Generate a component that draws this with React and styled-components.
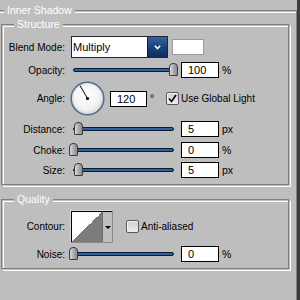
import React from 'react';
import styled, { createGlobalStyle } from 'styled-components';

const BG = '#bebebe';
const DARK = '#808080';

const Global = createGlobalStyle`
  html, body { margin: 0; padding: 0; background: ${BG}; }
  body { font-family: "Liberation Sans", Arial, sans-serif; font-size: 10px; color: #000; }
`;

const Page = styled.div`
  width: 300px;
  height: 300px;
  display: flex;
  overflow: hidden;
  background: ${BG};
`;

const Main = styled.div`
  flex: 1;
  min-width: 0;
  padding-top: 10px;
`;

const Edge = styled.div`
  width: 3px;
  flex-shrink: 0;
  background: #3c3c3c;
`;

const Group = styled.section`
  display: flex;
  flex-direction: column;
  border: 1px solid ${DARK};
  border-left: ${p => (p.$noLeft ? 'none' : `1px solid ${DARK}`)};
  box-shadow: inset ${p => (p.$noLeft ? 0 : 1)}px 1px 0 ${BG},
    inset ${p => (p.$noLeft ? 0 : 2)}px 2px 0 #fff, 1px 1px 0 ${BG}, 2px 2px 0 #fff;
  margin: ${p => p.$m || '0'};
  padding-bottom: ${p => p.$pb || 0}px;
  min-height: ${p => p.$minH || 0}px;
`;

const Legend = styled.div`
  align-self: flex-start;
  margin: -7px 0 0 ${p => p.$ml}px;
  padding: 0 3px;
  height: 13px;
  line-height: 13px;
  background: ${BG};
  color: #fff;
  font-size: 10.5px;
  white-space: nowrap;
`;

const Row = styled.div`
  display: flex;
  align-items: center;
  height: ${p => p.$h}px;
  margin-top: ${p => p.$mt}px;
`;

const Label = styled.div`
  width: 63px;
  flex-shrink: 0;
  text-align: right;
  white-space: nowrap;
`;

const Select = styled.div`
  display: flex;
  width: 97px;
  height: 22px;
  box-sizing: border-box;
  margin-left: 6px;
  border: 1px solid #262626;
  background: #fff;
`;

const SelectText = styled.div`
  flex: 1;
  padding-left: 1px;
  line-height: 20px;
  font-size: 11px;
`;

const SelectButton = styled.div`
  width: 19px;
  display: flex;
  align-items: center;
  justify-content: center;
  border-left: 1px solid #0b1a33;
  background: linear-gradient(#3463a3, #1a4480 50%, #0f2d5c);
`;

const Swatch = styled.div`
  width: 32px;
  height: 16px;
  box-sizing: border-box;
  margin-left: 4px;
  border: 1px solid #9a9a9a;
  background: #fff;
`;

const SliderWrap = styled.div`
  position: relative;
  width: 110px;
  height: 16px;
  flex-shrink: 0;
  margin-left: 4px;
`;

const Track = styled.div`
  margin: 6px 0 0 4px;
  width: 101px;
  height: 4px;
  box-sizing: border-box;
  border: 1px solid #0c1a30;
  border-radius: 2px;
  background: #2f619c;
`;

const Thumb = styled.div`
  position: absolute;
  top: 1px;
  width: 9px;
  height: 13px;
  box-sizing: border-box;
  border: 1px solid #3a3a3a;
  border-radius: 4px 4px 1px 1px;
  background: linear-gradient(90deg, #dcdcdc, #a8a8a8 55%, #8e8e8e);
`;

const Field = styled.div`
  width: ${p => p.$w || 38}px;
  height: 16px;
  box-sizing: border-box;
  flex-shrink: 0;
  margin-left: ${p => p.$ml}px;
  padding-left: 6px;
  border: 1px solid #000;
  background: #fff;
  font-size: 11px;
  line-height: 14px;
`;

const Unit = styled.div`
  width: ${p => (p.$w ? `${p.$w}px` : 'auto')};
  flex-shrink: 0;
  margin-left: 3px;
  align-self: ${p => (p.$top ? 'flex-start' : 'center')};
  margin-top: ${p => (p.$top ? 11 : 0)}px;
  font-size: 10.5px;
`;

const Dial = styled.svg`
  flex-shrink: 0;
  margin-left: 5px;
  display: block;
`;

const Check = styled.div`
  display: flex;
  align-items: center;
  margin-left: ${p => p.$ml}px;
  white-space: nowrap;
`;

const CheckBox = styled.div`
  width: 13px;
  height: 13px;
  box-sizing: border-box;
  margin-right: 2px;
  border: 1px solid #5a5a5a;
  border-radius: 2px;
  background: linear-gradient(#cfcfcf, #ededed);
  box-shadow: inset 1px 1px 0 #f4f4f4;
  display: flex;
  align-items: center;
  justify-content: center;
`;

const Contour = styled.div`
  display: flex;
  width: 43px;
  height: 33px;
  box-sizing: border-box;
  margin-left: 5px;
  border: 1px solid #d9d9d9;
  border-right-color: #8a8a8a;
  border-bottom-color: #8a8a8a;
`;

const ContourPreview = styled.div`
  width: 31px;
  box-sizing: border-box;
  border-top: 1px solid #000;
  border-left: 1px solid #000;
  background: linear-gradient(to bottom right, #fff 50%, #7c7c7c 50%);
`;

const ContourArrow = styled.div`
  flex: 1;
  display: flex;
  align-items: center;
  justify-content: center;
  border-left: 1px solid #6e6e6e;
  border-top: 1px solid #000;
  background: ${BG};
`;

const Caret = styled.div`
  width: 0;
  height: 0;
  border-left: 3px solid transparent;
  border-right: 3px solid transparent;
  border-top: 3px solid #000;
`;

const Slider = ({ pos }) => (
  <SliderWrap>
    <Track />
    <Thumb style={{ left: pos }} />
  </SliderWrap>
);

const SliderRow = ({ label, pos, value, unit, mt }) => (
  <Row $h={16} $mt={mt}>
    <Label>{label}</Label>
    <Slider pos={pos} />
    <Field $ml={2}>{value}</Field>
    <Unit>{unit}</Unit>
  </Row>
);

const CheckMark = () => (
  <svg width="11" height="11" viewBox="0 0 11 11">
    <polyline points="2,5.5 4.5,8.5 9,2" fill="none" stroke="#000" strokeWidth="1.6" />
  </svg>
);

export default function App() {
  return (
    <>
      <Global />
      <Page>
        <Main>
          <Group $noLeft $minH={300}>
            <Legend $ml={4}>Inner Shadow</Legend>
            <Group $m="7px 7px 0 1px" $pb={6}>
              <Legend $ml={12}>Structure</Legend>
              <Row $h={22} $mt={5}>
                <Label>Blend Mode:</Label>
                <Select>
                  <SelectText>Multiply</SelectText>
                  <SelectButton>
                    <svg width="7" height="5" viewBox="0 0 7 5">
                      <polyline points="0.8,0.8 3.5,3.6 6.2,0.8" fill="none" stroke="#fff" strokeWidth="1.5" />
                    </svg>
                  </SelectButton>
                </Select>
                <Swatch />
              </Row>
              <SliderRow label="Opacity:" pos={100} value="100" unit="%" mt={4} />
              <Row $h={35} $mt={3}>
                <Label>Angle:</Label>
                <Dial width="35" height="35" viewBox="0 0 35 35">
                  <defs>
                    <radialGradient id="dialFace" cx="45%" cy="40%" r="60%">
                      <stop offset="0%" stopColor="#ffffff" />
                      <stop offset="70%" stopColor="#f2f2f2" />
                      <stop offset="100%" stopColor="#d8d8d8" />
                    </radialGradient>
                  </defs>
                  <circle cx="17.5" cy="17.5" r="16.3" fill="url(#dialFace)" stroke="#56698f" strokeWidth="1.6" />
                  <circle cx="17.5" cy="17.5" r="15" fill="none" stroke="#c9cfdc" strokeWidth="0.8" />
                  <line x1="17.5" y1="17.5" x2="10" y2="4.5" stroke="#000" strokeWidth="1" />
                  <circle cx="17.5" cy="17.5" r="1.6" fill="#000" />
                </Dial>
                <Field $ml={5} $w={37}>120</Field>
                <Unit $w={16} $top>°</Unit>
                <Check $ml={0}>
                  <CheckBox>
                    <CheckMark />
                  </CheckBox>
                  Use Global Light
                </Check>
              </Row>
              <SliderRow label="Distance:" pos={5} value="5" unit="px" mt={5} />
              <SliderRow label="Choke:" pos={0} value="0" unit="%" mt={5} />
              <SliderRow label="Size:" pos={5} value="5" unit="px" mt={4} />
            </Group>
            <Group $m="14px 7px 0 1px" $pb={6}>
              <Legend $ml={12}>Quality</Legend>
              <Row $h={33} $mt={4}>
                <Label>Contour:</Label>
                <Contour>
                  <ContourPreview />
                  <ContourArrow>
                    <Caret />
                  </ContourArrow>
                </Contour>
                <Check $ml={13}>
                  <CheckBox />
                  Anti-aliased
                </Check>
              </Row>
              <SliderRow label="Noise:" pos={0} value="0" unit="%" mt={3} />
            </Group>
          </Group>
        </Main>
        <Edge />
      </Page>
    </>
  );
}
